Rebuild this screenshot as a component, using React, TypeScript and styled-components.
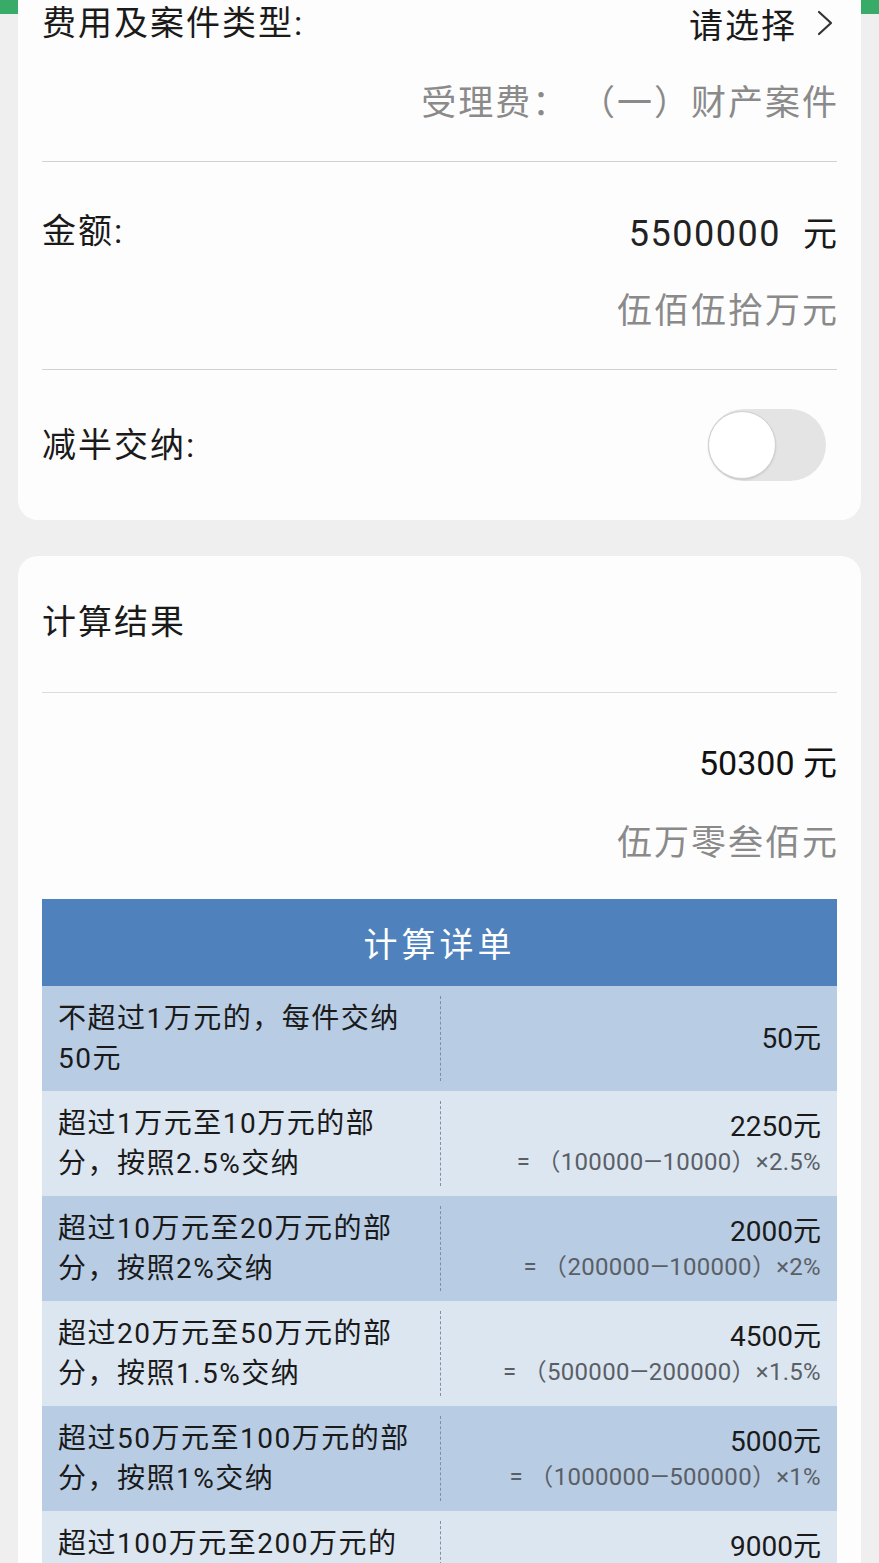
import React, { useState } from "react";
import styled, { createGlobalStyle } from "styled-components";

type DetailRow = {
  lines: string[];
  amount: string;
  formula?: string;
};

const details: DetailRow[] = [
  { lines: ["不超过1万元的，每件交纳", "50元"], amount: "50元" },
  {
    lines: ["超过1万元至10万元的部", "分，按照2.5%交纳"],
    amount: "2250元",
    formula: "= （100000—10000）×2.5%",
  },
  {
    lines: ["超过10万元至20万元的部", "分，按照2%交纳"],
    amount: "2000元",
    formula: "= （200000—100000）×2%",
  },
  {
    lines: ["超过20万元至50万元的部", "分，按照1.5%交纳"],
    amount: "4500元",
    formula: "= （500000—200000）×1.5%",
  },
  {
    lines: ["超过50万元至100万元的部", "分，按照1%交纳"],
    amount: "5000元",
    formula: "= （1000000—500000）×1%",
  },
  {
    lines: ["超过100万元至200万元的", "部分，按照0.9%交纳"],
    amount: "9000元",
    formula: "= （2000000—1000000）×0.9%",
  },
  {
    lines: ["超过200万元至500万元的", "部分，按照0.8%交纳"],
    amount: "24000元",
    formula: "= （5000000—2000000）×0.8%",
  },
  {
    lines: ["超过500万元至1000万元的", "部分，按照0.7%交纳"],
    amount: "3500元",
    formula: "= （5500000—5000000）×0.7%",
  },
];

const Chevron: React.FC = () => (
  <svg width="20" height="30" viewBox="0 0 20 30" fill="none">
    <polyline
      points="4,4 16,15 4,26"
      stroke="#333"
      strokeWidth="2.2"
      strokeLinecap="round"
      strokeLinejoin="round"
    />
  </svg>
);

const App: React.FC = () => {
  const [half, setHalf] = useState(false);

  return (
    <>
      <GlobalStyle />
      <Screen>
        <Card $scrolled>
          <FieldRow>
            <Line>
              <Label>费用及案件类型:</Label>
              <Picker>
                请选择
                <Chevron />
              </Picker>
            </Line>
            <SubLine>受理费： （一）财产案件</SubLine>
          </FieldRow>

          <FieldRow>
            <Line>
              <Label>金额:</Label>
              <Value>
                <Digits>5500000</Digits>
                <Unit>元</Unit>
              </Value>
            </Line>
            <SubLine>伍佰伍拾万元</SubLine>
          </FieldRow>

          <SwitchRow>
            <Label>减半交纳:</Label>
            <Toggle $on={half} onClick={() => setHalf(!half)}>
              <Knob $on={half} />
            </Toggle>
          </SwitchRow>
        </Card>

        <Card>
          <TitleRow>计算结果</TitleRow>
          <ResultBlock>
            <ResultValue>50300 元</ResultValue>
            <SubLine>伍万零叁佰元</SubLine>
          </ResultBlock>

          <Table>
            <TableHead>计算详单</TableHead>
            {details.map((row, i) => (
              <TableRow key={i} $dark={i % 2 === 0}>
                <RuleCell>
                  {row.lines.map((l) => (
                    <div key={l}>{l}</div>
                  ))}
                </RuleCell>
                <DashDivider />
                <AmountCell>
                  <Amount>{row.amount}</Amount>
                  {row.formula && <Formula>{row.formula}</Formula>}
                </AmountCell>
              </TableRow>
            ))}
          </Table>
        </Card>
      </Screen>
    </>
  );
};

export default App;

const GlobalStyle = createGlobalStyle`
  html, body {
    margin: 0;
    padding: 0;
  }
  body {
    background: linear-gradient(to bottom, #38ab68 0, #38ab68 14px, #efefef 14px);
    font-family: Roboto, "Noto Sans CJK SC", sans-serif;
    color: #1a1a1a;
  }
`;

const Screen = styled.div`
  display: flex;
  flex-direction: column;
  gap: 36px;
  padding: 0 18px 40px;
`;

// first card is partly scrolled out of view
const Card = styled.div<{ $scrolled?: boolean }>`
  background: #fdfdfd;
  border-radius: 20px;
  padding: 0 24px;
  margin-top: ${(p) => (p.$scrolled ? "-46px" : "0")};
  ${(p) => (p.$scrolled ? "border-top-left-radius: 0; border-top-right-radius: 0;" : "")}
`;

const FieldRow = styled.div`
  padding: 44px 0 32px;
  border-bottom: 1px solid #d2d2d2;
`;

const Line = styled.div`
  display: flex;
  align-items: center;
  justify-content: space-between;
  height: 50px;
`;

const Label = styled.div`
  font-size: 34px;
  letter-spacing: 2px;
  line-height: 50px;
  color: #1a1a1a;
`;

const Picker = styled.div`
  display: flex;
  align-items: center;
  gap: 18px;
  font-size: 34px;
  letter-spacing: 2px;
  color: #1a1a1a;
  margin-right: 2px;
`;

const SubLine = styled.div`
  margin-top: 31px;
  height: 50px;
  line-height: 50px;
  text-align: right;
  font-size: 35px;
  letter-spacing: 2px;
  margin-right: -2px;
  white-space: pre;
  color: #8a8a8a;
`;

const Value = styled.div`
  display: flex;
  align-items: baseline;
  gap: 22px;
`;

const Digits = styled.span`
  font-size: 36px;
  letter-spacing: 1.5px;
  color: #222;
`;

const Unit = styled.span`
  font-size: 34px;
  color: #1a1a1a;
`;

const SwitchRow = styled.div`
  display: flex;
  align-items: center;
  justify-content: space-between;
  padding: 39px 0;
`;

const Toggle = styled.button<{ $on: boolean }>`
  position: relative;
  width: 118px;
  height: 72px;
  margin-right: 11px;
  padding: 0;
  border: none;
  border-radius: 36px;
  background: ${(p) => (p.$on ? "#38ab68" : "#e4e4e4")};
  cursor: pointer;
`;

const Knob = styled.span<{ $on: boolean }>`
  position: absolute;
  top: 2px;
  left: ${(p) => (p.$on ? "48px" : "0")};
  width: 68px;
  height: 68px;
  box-sizing: border-box;
  border-radius: 50%;
  background: #fff;
  border: 1.5px solid #d0d0d0;
  box-shadow: 0 1px 2px rgba(0, 0, 0, 0.12);
`;

const TitleRow = styled.div`
  padding: 41px 0 45px;
  line-height: 50px;
  font-size: 34px;
  letter-spacing: 2px;
  border-bottom: 1px solid #dcdcdc;
`;

const ResultBlock = styled.div`
  padding: 45px 0 30px;
`;

const ResultValue = styled.div`
  height: 50px;
  line-height: 50px;
  text-align: right;
  font-size: 34px;
  color: #111;
`;

const Table = styled.div`
  display: flex;
  flex-direction: column;
  padding-bottom: 24px;
`;

const TableHead = styled.div`
  height: 87px;
  display: flex;
  align-items: center;
  justify-content: center;
  background: #4f81bd;
  color: #fff;
  font-size: 34px;
  letter-spacing: 4px;
`;

const TableRow = styled.div<{ $dark: boolean }>`
  display: grid;
  grid-template-columns: 398px 1px 1fr;
  height: 105px;
  background: ${(p) => (p.$dark ? "#b8cce4" : "#dce6f1")};
`;

const RuleCell = styled.div`
  display: flex;
  flex-direction: column;
  justify-content: center;
  padding-left: 16px;
  font-size: 28px;
  letter-spacing: 1.5px;
  line-height: 40px;
  white-space: nowrap;
  color: #1a1a1a;
`;

const DashDivider = styled.div`
  margin: 10px 0;
  border-left: 1px dashed #7f8fa3;
`;

const AmountCell = styled.div`
  display: flex;
  flex-direction: column;
  justify-content: center;
  align-items: flex-end;
  padding-right: 16px;
  white-space: nowrap;
`;

const Amount = styled.div`
  font-size: 28px;
  line-height: 36px;
  color: #1a1a1a;
`;

const Formula = styled.div`
  font-size: 24px;
  line-height: 34px;
  letter-spacing: 0.3px;
  white-space: pre;
  color: #5a5f66;
`;
